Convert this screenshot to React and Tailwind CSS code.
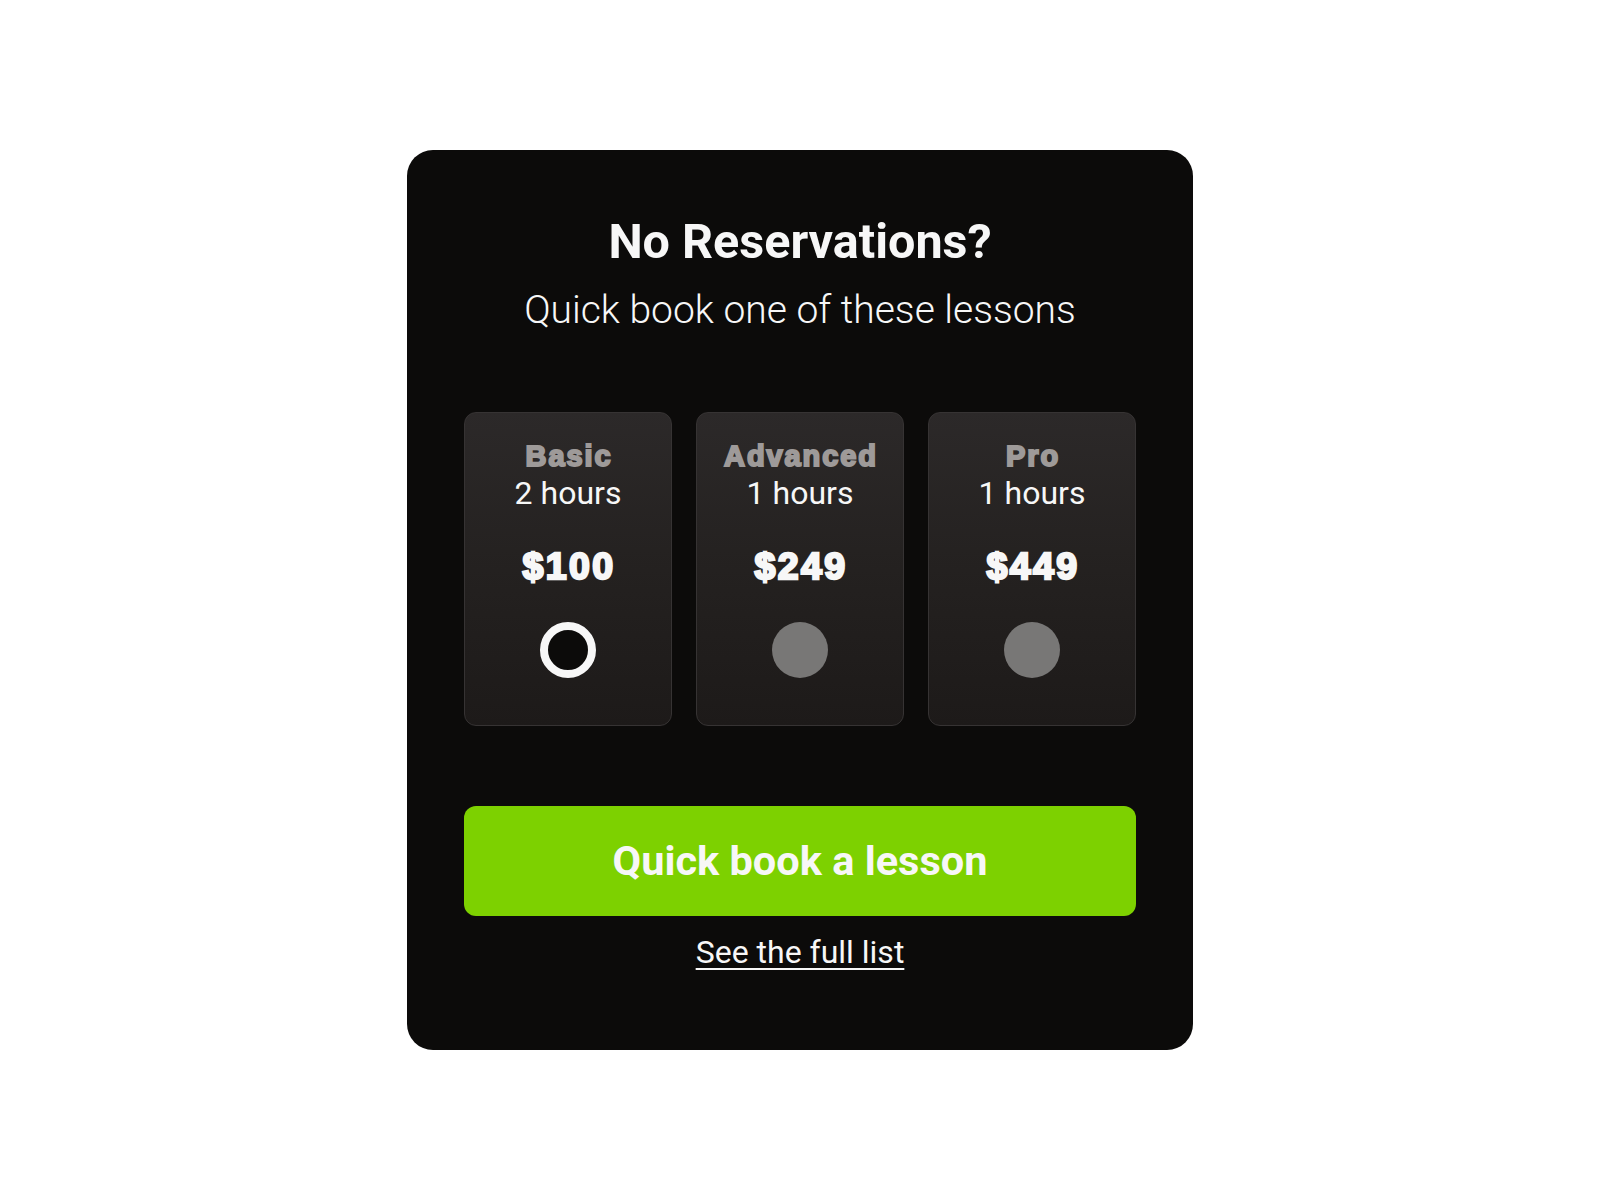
import React, { useState } from "react";

const lessons = [
    { name: "Basic", hours: "2 hours", price: "$100" },
    { name: "Advanced", hours: "1 hours", price: "$249" },
    { name: "Pro", hours: "1 hours", price: "$449" },
];

const LessonCard = ({ lesson, selected, onSelect }) => {
    return (
        <button
            type="button"
            onClick={onSelect}
            className="flex flex-col items-center rounded-[12px] border border-[#363333] bg-gradient-to-b from-[#2c2929] via-[#242120] to-[#1d1a19] pt-[29px] pb-[47px]"
        >
            <span className="pl-[2px] text-[29px] leading-[28px] font-bold text-[#9e9a99] tracking-[1.9px] [-webkit-text-stroke:2px_#9e9a99] font-['Liberation_Sans',sans-serif]">
                {lesson.name}
            </span>
            <span className="mt-2 text-[32px] leading-[31px] text-[#f7f7f7] font-['Roboto',sans-serif]">
                {lesson.hours}
            </span>
            <span className="mt-[39px] pl-[2px] text-[37.5px] leading-[37px] font-bold text-[#f7f7f7] tracking-[2.4px] [-webkit-text-stroke:2.4px_#f7f7f7] font-['Liberation_Sans',sans-serif]">
                {lesson.price}
            </span>
            {selected ? (
                <span className="mt-[37px] h-[56px] w-[56px] rounded-full border-[8px] border-[#f7f7f7] bg-[#0c0b0a]" />
            ) : (
                <span className="mt-[37px] h-[56px] w-[56px] rounded-full bg-[#787776]" />
            )}
        </button>
    );
};

export default function App() {
    const [selected, setSelected] = useState(0);

    return (
        <div className="min-h-screen bg-white flex items-center justify-center font-['Roboto',sans-serif]">
            <div className="w-[786px] rounded-[26px] bg-[#0c0b0a] px-[57px] pt-[68px] pb-[82px] flex flex-col items-center text-center">
                <h1 className="text-[48.5px] leading-[48px] font-bold text-[#f7f7f7]">No Reservations?</h1>
                <p className="mt-[25px] text-[39px] leading-[38px] font-light text-[#f7f7f7]">
                    Quick book one of these lessons
                </p>

                {/* Lesson options */}
                <div className="mt-[83px] grid grid-cols-3 gap-6 w-full">
                    {lessons.map((lesson, i) => (
                        <LessonCard
                            key={lesson.name}
                            lesson={lesson}
                            selected={selected === i}
                            onSelect={() => setSelected(i)}
                        />
                    ))}
                </div>

                <button
                    type="button"
                    className="mt-20 w-full h-[110px] rounded-[12px] bg-[#7dd100] text-[41.5px] font-bold text-[#f7f7f7]"
                >
                    Quick book a lesson
                </button>
                <a href="#" className="mt-5 text-[32px] leading-[32px] text-[#f7f7f7] underline decoration-2 underline-offset-[5px]">
                    See the full list
                </a>
            </div>
        </div>
    );
}
